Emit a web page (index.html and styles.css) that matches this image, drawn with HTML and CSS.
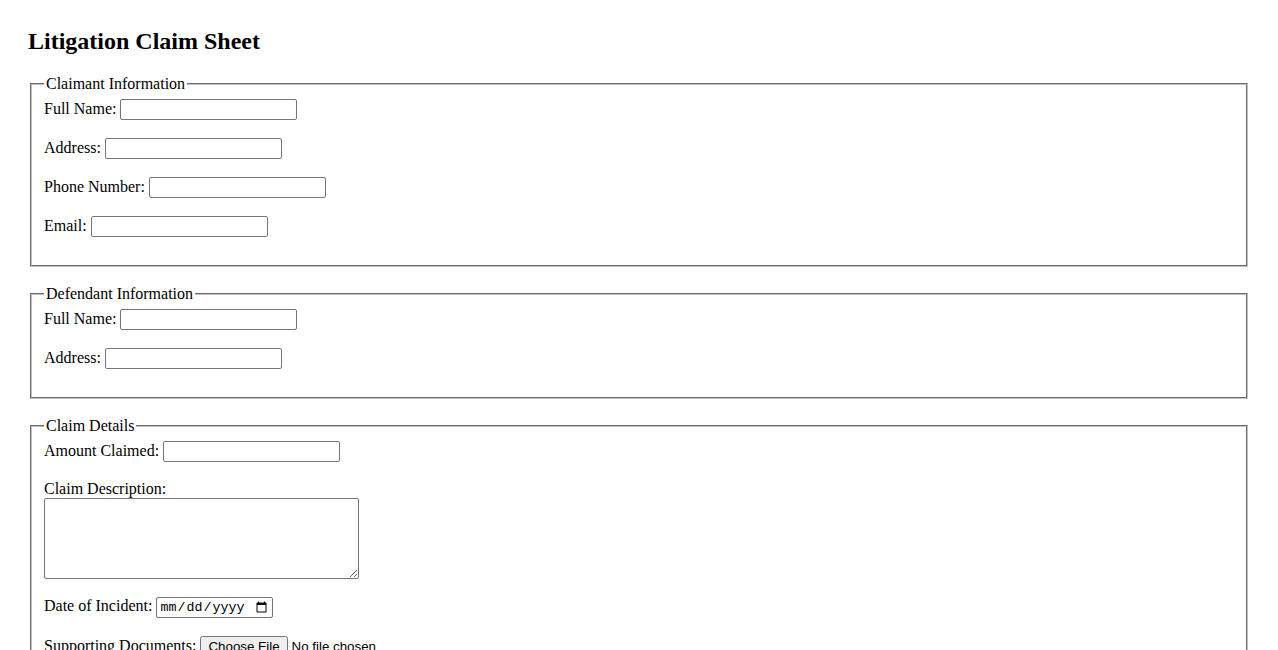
FILE: index.html
```html
<!DOCTYPE html>
<html lang="en">
<head>
    <meta charset="UTF-8">
    <meta name="viewport" content="width=device-width, initial-scale=1.0">
    <title>Litigation Claim Sheet</title>
    <link rel="stylesheet" href="styles.css">
</head>
<body>

<div class="container">
    <h2>Litigation Claim Sheet</h2>
    <form>
        <fieldset>
            <legend>Claimant Information</legend>
            <label for="claimant-name">Full Name:</label>
            <input type="text" id="claimant-name" name="claimant-name"><br><br>
            <label for="claimant-address">Address:</label>
            <input type="text" id="claimant-address" name="claimant-address"><br><br>
            <label for="claimant-phone">Phone Number:</label>
            <input type="tel" id="claimant-phone" name="claimant-phone"><br><br>
            <label for="claimant-email">Email:</label>
            <input type="email" id="claimant-email" name="claimant-email"><br><br>
        </fieldset>

        <fieldset>
            <legend>Defendant Information</legend>
            <label for="defendant-name">Full Name:</label>
            <input type="text" id="defendant-name" name="defendant-name"><br><br>
            <label for="defendant-address">Address:</label>
            <input type="text" id="defendant-address" name="defendant-address"><br><br>
        </fieldset>

        <fieldset>
            <legend>Claim Details</legend>
            <label for="amount">Amount Claimed:</label>
            <input type="number" id="amount" name="amount"><br><br>
            <label for="description">Claim Description:</label><br>
            <textarea id="description" name="description" rows="5" cols="40"></textarea><br><br>
            <label for="incident-date">Date of Incident:</label>
            <input type="date" id="incident-date" name="incident-date"><br><br>
            <label for="documents">Supporting Documents:</label>
            <input type="file" id="documents" name="documents"><br><br>
        </fieldset>

        <input type="submit" value="Submit Claim">
    </form>
</div>

</body>
</html>
```
FILE: styles.css
```css
body {
    font-family: "Liberation Serif", "Times New Roman", serif;
    font-size: 16px;
    color: #000;
    background: #fff;
    margin: 8px;
}
.container {
    padding: 20px;
}
h2 {
    font-size: 24px;
    margin: 0 0 20px 0;
}
fieldset {
    margin: 0 2px 18px 2px;
    border: 2px groove #c0c0c0;
    padding: 6px 12px 10px 12px;
}
legend {
    padding: 0 2px;
}
input, textarea {
    font-family: "Liberation Sans", Arial, sans-serif;
    font-size: 13.33px;
}
input[type="text"],
input[type="tel"],
input[type="email"],
input[type="number"] {
    width: 177px;
    height: 21px;
    box-sizing: border-box;
    border: 1px solid #767676;
    border-radius: 2px;
    padding: 1px 2px;
}
input[type="date"] {
    font-family: "Liberation Mono", "Courier New", monospace;
    width: 117px;
    height: 21px;
    box-sizing: border-box;
    border: 1px solid #767676;
    border-radius: 2px;
    padding: 1px 2px;
}
textarea {
    width: 315px;
    height: 81px;
    box-sizing: border-box;
    border: 1px solid #767676;
    border-radius: 2px;
    margin: 0;
    vertical-align: bottom;
}
```
